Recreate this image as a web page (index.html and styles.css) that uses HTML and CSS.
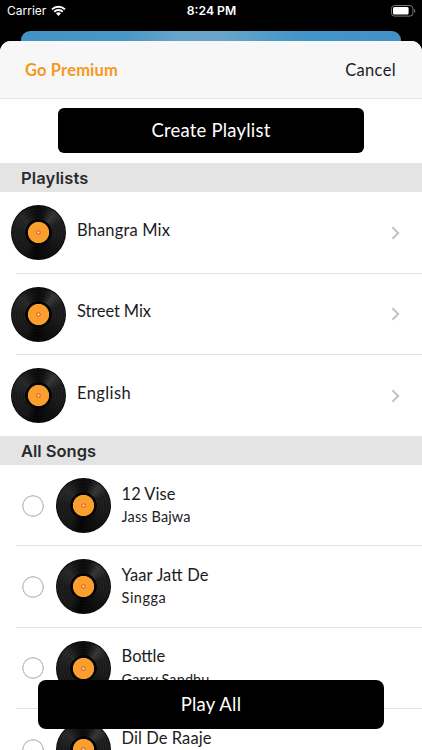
FILE: index.html
```
<!DOCTYPE html>
<html lang="en">
<head>
<meta charset="utf-8">
<title>Playlists</title>
<link rel="stylesheet" href="styles.css">
</head>
<body>
<svg class="defs" width="0" height="0" aria-hidden="true">
  <symbol id="chevron" viewBox="0 0 9 14"><path d="M1.4 1.2 7.2 7l-5.8 5.8" fill="none" stroke="#c2c2c4" stroke-width="2"/></symbol>
</svg>
<div class="screen">
  <header class="status">
    <div class="carrier"><span class="carrier-name">Carrier</span>
      <svg width="15" height="12" viewBox="0 0 16 12" fill="none" stroke="#fff"><path d="M1.1 4.3a9.8 9.8 0 0 1 13.8 0M3.5 6.8a6.4 6.4 0 0 1 9 0" stroke-width="2.1"/><path d="M8 11.2 5.3 8.5a3.9 3.9 0 0 1 5.4 0z" fill="#fff" stroke="none"/></svg>
    </div>
    <time class="clock">8:24 PM</time>
    <svg class="battery" width="25" height="12" viewBox="0 0 25 12"><rect x=".5" y=".5" width="21.4" height="10.6" rx="3" fill="none" stroke="#777"/><rect x="2" y="2" width="15.6" height="7.6" rx="1.5" fill="#fff"/><path d="M23.2 4v3.8q1.2-.5 1.2-1.9T23.2 4z" fill="#777"/></svg>
  </header>
  <div class="behind"></div>
  <main class="sheet">
    <nav class="nav"><span class="premium">Go Premium</span><span class="cancel">Cancel</span></nav>
    <div class="create-wrap"><button class="create"><span>Create Playlist</span></button></div>
    <h2 class="section"><span class="s-playlists">Playlists</span></h2>
    <div class="row playlist"><i class="disc"></i><span class="title t-bhangra">Bhangra Mix</span><svg class="chev"><use href="#chevron"/></svg></div>
    <div class="row playlist"><i class="disc"></i><span class="title t-street">Street Mix</span><svg class="chev"><use href="#chevron"/></svg></div>
    <div class="row playlist last"><i class="disc"></i><span class="title t-english">English</span><svg class="chev"><use href="#chevron"/></svg></div>
    <h2 class="section"><span class="s-songs">All Songs</span></h2>
    <div class="row song"><i class="radio"></i><i class="disc"></i><div class="text"><span class="title">12 Vise</span><span class="artist">Jass Bajwa</span></div></div>
    <div class="row song"><i class="radio"></i><i class="disc"></i><div class="text"><span class="title t-yaar">Yaar Jatt De</span><span class="artist a-singga">Singga</span></div></div>
    <div class="row song"><i class="radio"></i><i class="disc"></i><div class="text"><span class="title">Bottle</span><span class="artist">Garry Sandhu</span></div></div>
    <div class="row song"><i class="radio"></i><i class="disc"></i><div class="text"><span class="title t-dil">Dil De Raaje</span></div></div>
  </main>
  <button class="play"><span>Play All</span></button>
</div>
</body>
</html>
```
FILE: styles.css
```
* { box-sizing: border-box; }
body { margin: 0; background: #000; font-family: Lato, "Open Sans", sans-serif; color: #1c1c1e; }
.defs { display: block; }
.screen { position: relative; width: 422px; height: 750px; overflow: hidden; background: #000; }
.status { display: grid; grid-template-columns: 1fr auto 1fr; align-items: center; height: 31px; padding: 0 6px 9px 7px; color: #fff; font-family: Inter, sans-serif; font-size: 12.2px; line-height: 16px; }
.carrier { display: flex; align-items: center; gap: 4.5px; }
.carrier-name { font-size: 12px; }
.clock { font-weight: 600; }
.battery { justify-self: end; }
.behind { height: 20px; margin: 0 21px -10px; border-radius: 9px 9px 0 0; background: linear-gradient(90deg, #4292c5 0, #4897c7 27%, #69a5ca 42%, #69a5ca 53%, #4295c8 74%, #4590c5 100%); }
.sheet { position: relative; height: 709px; overflow: hidden; border-radius: 11px 11px 0 0; background: #fff; }
.nav { display: flex; align-items: center; justify-content: space-between; height: 58px; padding: 1px 26px 0 25px; background: #f7f7f7; border-bottom: 1px solid #e6e6e6; }
.premium { color: #f7981d; font-size: 16.5px; font-weight: 700; letter-spacing: .16px; }
.cancel { font-size: 16.5px; letter-spacing: .35px; }
.create-wrap { display: flex; justify-content: center; height: 64px; padding-top: 9px; }
button { border: 0; padding: 0 0 1px; background: #000; color: #fff; font-family: Lato, sans-serif; font-size: 18.5px; letter-spacing: .2px; }
.create { width: 306px; height: 45px; border-radius: 6px; }
.section { display: flex; align-items: center; height: 29px; margin: 0; padding: 1px 0 0 21px; background: #e4e4e4; font: 600 16.5px/20px Inter, sans-serif; color: #2a2a2c; }
.s-playlists { letter-spacing: .12px; }
.row { position: relative; display: flex; align-items: center; height: 81.5px; }
.row::after { content: ""; position: absolute; left: 16px; right: 0; bottom: 0; height: 1px; background: #e2e2e2; }
.row.last { height: 81px; }
.row.last::after { display: none; }
.playlist { padding: 0 22px 0 11px; }
.playlist .title { margin: -6px 0 0 11px; }
.song { height: 81.3px; padding-left: 22px; }
.title { font-size: 16.5px; line-height: 20px; white-space: nowrap; }
.t-bhangra { letter-spacing: .15px; }
.t-street { letter-spacing: -.12px; }
.t-english { letter-spacing: .4px; }
.t-yaar { word-spacing: .6px; }
.t-dil { letter-spacing: .06px; }
.artist { font-size: 14.5px; line-height: 18px; letter-spacing: .12px; white-space: nowrap; }
.a-singga { letter-spacing: .5px; }
.text { display: flex; flex-direction: column; align-self: flex-start; gap: 4.3px; margin-left: 11px; padding-top: 18.7px; }
.chev { width: 9px; height: 14px; margin-left: auto; }
.radio { width: 22px; height: 22px; margin-right: 11.6px; border-radius: 50%; background: radial-gradient(circle, transparent 9.2px, #c3c3c5 9.8px 10.6px, transparent 11.1px); }
.disc {
  flex: none; width: 55px; height: 55px; border-radius: 50%;
  background:
    radial-gradient(circle, #fff 0 .6px, #f08a3a 1.1px, #ee7328 1.5px 2.1px, #fa9e2d 2.7px 10.2px, #050505 11px 13px, transparent 13.6px),
    radial-gradient(circle, transparent 26px, #080808 26.8px),
    repeating-radial-gradient(circle, rgba(0,0,0,.12) 0 1px, rgba(255,255,255,.01) 2px 3px),
    conic-gradient(#0c0c0c 0deg, #121212 15deg, #3a3a3a 40deg, #1f1f1f 65deg, #1e1e1e 95deg, #101010 145deg, #050505 190deg, #181818 215deg, #1e1e1e 275deg, #2a2a2a 315deg, #111 345deg, #0c0c0c 360deg);
}
.play { position: absolute; left: 38px; bottom: 21px; width: 346px; height: 49px; border-radius: 8px; }
```
